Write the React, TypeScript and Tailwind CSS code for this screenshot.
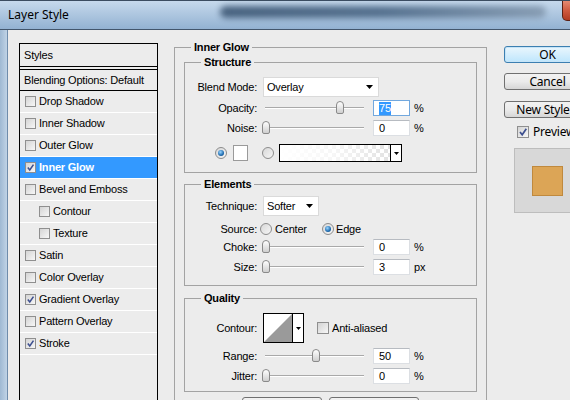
import React from "react";

const tah = "font-['Liberation_Sans',Arial,sans-serif] text-[11px] tracking-[-0.2px] text-black";
const seg = "font-['Noto_Sans',Arial,sans-serif] text-[12px] text-black";

function Check({ checked = false, big = false }: { checked?: boolean; big?: boolean }) {
  return (
    <span
      className={`flex shrink-0 items-center justify-center border border-[#8f8f8f] bg-linear-to-br from-[#d4d4d4] to-[#f7f7f7] ${
        big ? "h-[12px] w-[12px]" : "h-[11px] w-[11px]"
      }`}
    >
      {checked && (
        <svg viewBox="0 0 10 10" className="h-full w-full">
          <path d="M2 5 L4.2 7.8 L8.3 1.8" fill="none" stroke="#3d4f8f" strokeWidth="1.7" />
        </svg>
      )}
    </span>
  );
}

function Radio({ on = false }: { on?: boolean }) {
  return (
    <span className="flex h-[12px] w-[12px] shrink-0 items-center justify-center rounded-full border border-[#8c8c8c] bg-linear-to-br from-[#d8d8d8] to-[#f6f6f6]">
      {on && (
        <span className="h-[6px] w-[6px] rounded-full bg-[radial-gradient(circle_at_40%_35%,#9bd6ff,#1f6cb0_60%,#0c3d72)]" />
      )}
    </span>
  );
}

function Arrow() {
  return (
    <svg width="7" height="4" viewBox="0 0 7 4" className="shrink-0">
      <path d="M0 0H7L3.5 4Z" fill="#000" />
    </svg>
  );
}

function Slider({ pos }: { pos: number }) {
  return (
    <div className="relative ml-[5px] flex h-[16px] w-[104px] shrink-0 items-center">
      <div className="ml-[3px] h-[2px] w-[99px] border-t border-[#a9a9a9] bg-white" />
      <div
        className="absolute top-[1px] h-[13px] w-[8px] rounded-t-[4px] rounded-b-[2px] border border-[#8a8a8a] bg-linear-to-b from-white to-[#cfcfcf]"
        style={{ left: pos }}
      />
    </div>
  );
}

function SliderRow({
  label,
  pos,
  value,
  unit = "%",
  focus = false,
  top,
}: {
  label: string;
  pos: number;
  value: string;
  unit?: string;
  focus?: boolean;
  top: string;
}) {
  return (
    <div className={`flex h-[16px] items-center ${top}`}>
      <span className="w-[72px] text-right">{label}</span>
      <Slider pos={pos} />
      <div
        className={`ml-[7px] flex h-[16px] w-[37px] items-center border bg-white pl-[5px] ${
          focus ? "border-[#72a8de]" : "border-[#dcdfe3] border-t-[#b7bbc1]"
        }`}
      >
        {focus ? <span className="bg-[#3399ff] leading-[13px] text-white">{value}</span> : value}
      </div>
      <span className="ml-[4px]">{unit}</span>
    </div>
  );
}

function Group({ title, className, children }: { title: string; className: string; children: React.ReactNode }) {
  return (
    <fieldset className={`border border-[#a3a3a3] p-0 ${className}`}>
      <legend className="ml-[16px] px-[3px] font-bold leading-[12px]">{title}</legend>
      {children}
    </fieldset>
  );
}

const styles: { name: string; checked?: boolean; sub?: boolean; active?: boolean }[] = [
  { name: "Drop Shadow" },
  { name: "Inner Shadow" },
  { name: "Outer Glow" },
  { name: "Inner Glow", checked: true, active: true },
  { name: "Bevel and Emboss" },
  { name: "Contour", sub: true },
  { name: "Texture", sub: true },
  { name: "Satin" },
  { name: "Color Overlay" },
  { name: "Gradient Overlay", checked: true },
  { name: "Pattern Overlay" },
  { name: "Stroke", checked: true },
];

function StylesList() {
  return (
    <div className="ml-[11px] mt-[13px] flex h-[400px] w-[139px] shrink-0 flex-col border border-black">
      <div className="flex h-[23px] items-center border-b border-black pl-[4px]">Styles</div>
      <div className="h-[2px]" />
      <div className="flex h-[22px] items-center border-y border-black pl-[4px]">Blending Options: Default</div>
      {styles.map((s) => (
        <div
          key={s.name}
          className={`flex h-[22px] items-center border-b border-white ${s.sub ? "pl-[19px]" : "pl-[5px]"} ${
            s.active ? "bg-[#3399ff] font-bold text-white" : ""
          }`}
        >
          <Check checked={s.checked} />
          <span className="ml-[3px]">{s.name}</span>
        </div>
      ))}
    </div>
  );
}

function Button({ label, focus = false, className }: { label: string; focus?: boolean; className: string }) {
  return (
    <div
      className={`flex shrink-0 items-center justify-center whitespace-nowrap rounded-[3px] border leading-[14px] ${
        focus
          ? "border-[#3c7fb1] bg-linear-to-b from-[#eaf6fd] to-[#bee6fd] shadow-[inset_0_0_0_1px_#c6e4f7]"
          : "border-[#707070] bg-linear-to-b from-[#f2f2f2] via-[#ebebeb] to-[#d6d6d6]"
      } ${className}`}
    >
      {label}
    </div>
  );
}

export default function App() {
  return (
    <div className="flex h-[400px] w-[570px] flex-col overflow-hidden bg-[#ececec]">
      {/* title bar */}
      <div className="flex h-[30px] shrink-0 items-start border-t border-b border-t-[#3b4c60] border-b-[#43566c] bg-linear-to-b from-[#c6d9ec] to-[#93b2d2]">
        <span className={`${seg} ml-[8px] mt-[5px] w-[60px] shrink-0 whitespace-nowrap text-[11.5px]`}>Layer Style</span>
        <div className="ml-[152px] mt-[5px] h-[12px] w-[326px] shrink-0 rounded-[6px] bg-linear-to-r from-[#2d4866] via-[#3e5b7a] to-[#7d92a8] opacity-80 blur-[3px]" />
        <div className="ml-[16px] h-[20px] w-[40px] shrink-0 rounded-bl-[5px] border border-t-0 border-[#5b2014] bg-linear-to-b from-[#e58a72] via-[#cf5a40] to-[#b13a22]" />
      </div>

      {/* body */}
      <div className={`flex min-h-0 flex-1 ${tah}`}>
        <div className="w-[8px] shrink-0 border-r border-[#6f8cab] bg-linear-to-r from-[#9fb9d3] to-[#c0d3e6]" />
        <StylesList />

        {/* main settings */}
        <fieldset className="ml-[16px] mt-[11px] h-[420px] w-[313px] shrink-0 border border-[#a3a3a3] p-0">
          <legend className="ml-[16px] px-[3px] font-bold leading-[12px]">Inner Glow</legend>

          <Group title="Structure" className="mx-[9px] mt-[3px]">
            <div className="mt-[9px] flex h-[20px] items-center">
              <span className="w-[72px] text-right">Blend Mode:</span>
              <div className="ml-[6px] flex h-[20px] w-[116px] items-center justify-between border border-[#dadada] bg-white pl-[3px] pr-[5px]">
                <span>Overlay</span>
                <Arrow />
              </div>
            </div>
            <SliderRow label="Opacity:" pos={74} value="75" focus top="mt-[3px]" />
            <SliderRow label="Noise:" pos={0} value="0" top="mt-[4px]" />
            <div className="mb-[10px] mt-[8px] flex h-[18px] items-center">
              <span className="ml-[30px]">
                <Radio on />
              </span>
              <span className="ml-[6px] h-[16px] w-[15px] border border-[#9a9a9a] bg-white" />
              <span className="ml-[14px]">
                <Radio />
              </span>
              <div className="ml-[5px] flex h-[18px] w-[123px] border border-black">
                <div className="flex-1 bg-[repeating-conic-gradient(#e2e2e2_0_25%,#ffffff_0_50%)] bg-[length:8px_8px]">
                  <div className="h-full w-full bg-linear-to-r from-white via-white/70 to-white/0" />
                </div>
                <div className="flex w-[11px] items-center justify-center border-l border-black bg-white">
                  <svg width="5" height="3" viewBox="0 0 5 3">
                    <path d="M0 0H5L2.5 3Z" fill="#000" />
                  </svg>
                </div>
              </div>
            </div>
          </Group>

          <Group title="Elements" className="mx-[9px] mt-[5px]">
            <div className="mt-[6px] flex h-[20px] items-center">
              <span className="w-[72px] text-right">Technique:</span>
              <div className="ml-[6px] flex h-[20px] w-[56px] items-center justify-between border border-[#dadada] bg-white pl-[3px] pr-[5px]">
                <span>Softer</span>
                <Arrow />
              </div>
            </div>
            <div className="mt-[3px] flex h-[20px] items-center">
              <span className="w-[72px] text-right">Source:</span>
              <span className="ml-[3px]">
                <Radio />
              </span>
              <span className="ml-[3px] w-[47px]">Center</span>
              <Radio on />
              <span className="ml-[2px]">Edge</span>
            </div>
            <SliderRow label="Choke:" pos={0} value="0" top="mt-0" />
            <div className="mb-[10px]">
              <SliderRow label="Size:" pos={0} value="3" unit="px" top="mt-[4px]" />
            </div>
          </Group>

          <Group title="Quality" className="mx-[9px] mt-[6px]">
            <div className="mt-[9px] flex h-[30px] items-center">
              <span className="w-[72px] text-right">Contour:</span>
              <div className="ml-[6px] flex h-[30px] w-[41px] border border-black bg-white">
                <svg viewBox="0 0 28 28" preserveAspectRatio="none" className="h-full w-[28px]">
                  <path d="M0 28 L28 0 L28 28 Z" fill="#9a9a9a" />
                </svg>
                <div className="flex flex-1 items-center justify-center border-l border-black">
                  <svg width="5" height="3" viewBox="0 0 5 3">
                    <path d="M0 0H5L2.5 3Z" fill="#000" />
                  </svg>
                </div>
              </div>
              <span className="ml-[13px]">
                <Check big />
              </span>
              <span className="ml-[3px]">Anti-aliased</span>
            </div>
            <SliderRow label="Range:" pos={50} value="50" top="mt-[5px]" />
            <div className="mb-[7px]">
              <SliderRow label="Jitter:" pos={0} value="0" top="mt-[4px]" />
            </div>
          </Group>

          <div className={`${seg} mt-[5px] flex`}>
            <Button label="Make Default" className="ml-[67px] h-[24px] w-[80px]" />
            <Button label="Reset to Default" className="ml-[7px] h-[24px] w-[90px]" />
          </div>
        </fieldset>

        {/* right column */}
        <div className={`${seg} ml-[17px] flex shrink-0 flex-col`}>
          <Button label="OK" focus className="mt-[16px] h-[17px] w-[87px]" />
          <Button label="Cancel" className="mt-[10px] h-[17px] w-[87px]" />
          <Button label="New Style..." className="mt-[11px] h-[17px] w-[87px]" />
          <div className="ml-[13px] mt-[8px] flex h-[12px] items-center">
            <Check checked big />
            <span className="ml-[4px]">Preview</span>
          </div>
          <div className="ml-[10px] mt-[10px] flex h-[65px] w-[66px] items-center justify-center border border-[#bdbdbd] bg-[#d8d8d8]">
            <div className="h-[30px] w-[31px] border border-[#c0893d] bg-[#dca556]" />
          </div>
        </div>
      </div>
    </div>
  );
}
